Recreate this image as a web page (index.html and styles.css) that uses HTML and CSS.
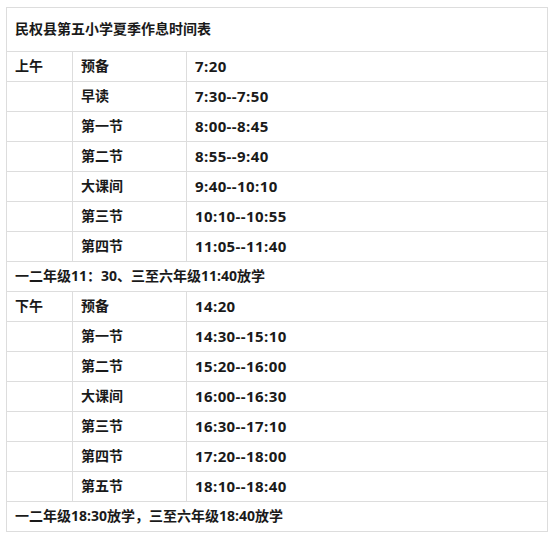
FILE: index.html
```html
<!DOCTYPE html>
<html lang="zh-CN">
<head>
<meta charset="utf-8">
<title>民权县第五小学夏季作息时间表</title>
<link rel="stylesheet" href="styles.css">
</head>
<body>
<table class="schedule">
  <colgroup>
    <col class="c1"><col class="c2"><col class="c3">
  </colgroup>
  <tr class="title"><td colspan="3">民权县第五小学夏季作息时间表</td></tr>
  <tr><td>上午</td><td>预备</td><td class="t">7:20</td></tr>
  <tr><td></td><td>早读</td><td class="t">7:30--7:50</td></tr>
  <tr><td></td><td>第一节</td><td class="t">8:00--8:45</td></tr>
  <tr><td></td><td>第二节</td><td class="t">8:55--9:40</td></tr>
  <tr><td></td><td>大课间</td><td class="t">9:40--10:10</td></tr>
  <tr><td></td><td>第三节</td><td class="t">10:10--10:55</td></tr>
  <tr><td></td><td>第四节</td><td class="t">11:05--11:40</td></tr>
  <tr><td colspan="3">一二年级11：30、三至六年级11:40放学</td></tr>
  <tr><td>下午</td><td>预备</td><td class="t">14:20</td></tr>
  <tr><td></td><td>第一节</td><td class="t">14:30--15:10</td></tr>
  <tr><td></td><td>第二节</td><td class="t">15:20--16:00</td></tr>
  <tr><td></td><td>大课间</td><td class="t">16:00--16:30</td></tr>
  <tr><td></td><td>第三节</td><td class="t">16:30--17:10</td></tr>
  <tr><td></td><td>第四节</td><td class="t">17:20--18:00</td></tr>
  <tr><td></td><td>第五节</td><td class="t">18:10--18:40</td></tr>
  <tr><td colspan="3">一二年级18:30放学，三至六年级18:40放学</td></tr>
</table>
</body>
</html>
```
FILE: styles.css
```css
html, body {
  margin: 0;
  padding: 0;
  background: #fff;
}
body {
  padding: 7px 0 0 6px;
}
.schedule {
  border-collapse: collapse;
  table-layout: fixed;
  width: 541px;
  font-family: "Open Sans", "Noto Sans CJK SC", sans-serif;
  font-weight: bold;
  font-size: 14px;
  color: #1a1a1a;
}
.c1 { width: 66px; }
.c2 { width: 114px; }
.c3 { width: 361px; }
.schedule td {
  border: 1px solid #dddddd;
  padding: 0 8px 1px;
  height: 28px;
  line-height: 20px;
  vertical-align: middle;
  white-space: nowrap;
}
.schedule tr.title td {
  height: 42px;
}
.schedule td.t {
  font-size: 15px;
  letter-spacing: 0.4px;
}
```
